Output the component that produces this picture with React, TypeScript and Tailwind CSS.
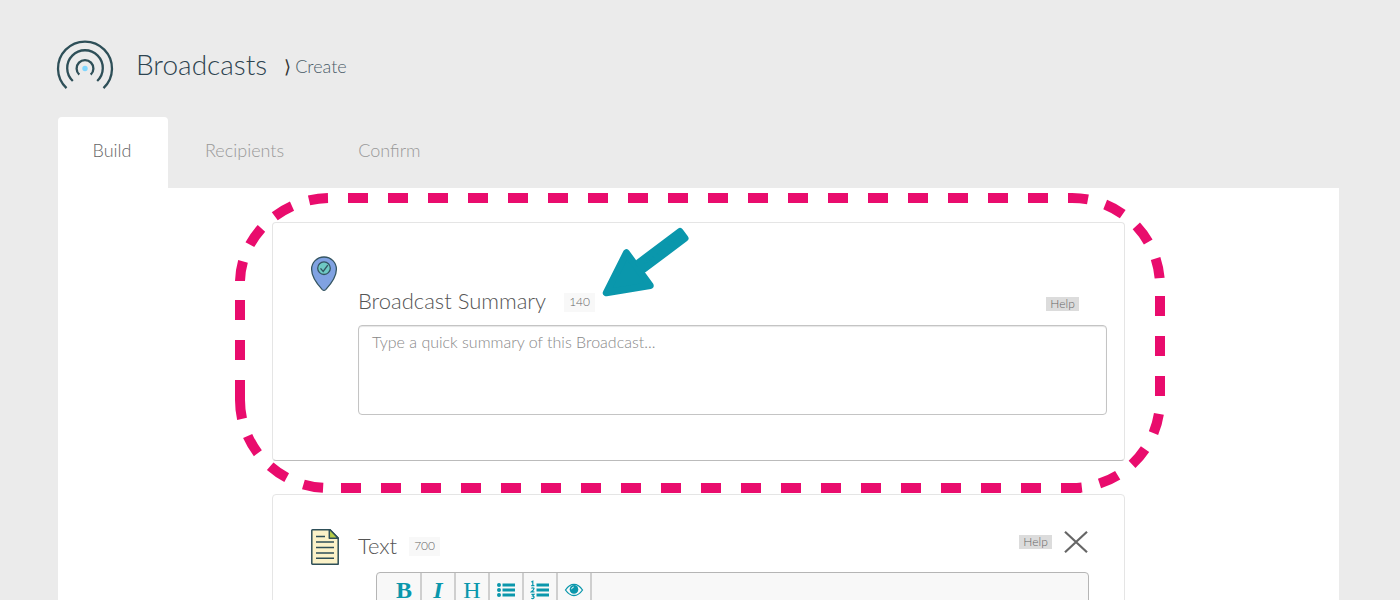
import { useState } from "react";
import type { ReactNode } from "react";

const BroadcastLogo = () => (
  <svg className="h-[52px] w-[58px] flex-none" viewBox="0 0 58 52" fill="none" stroke="#2e4f58" strokeWidth="2.3" aria-hidden="true">
    <path d="M10.5 48.2A27 27 0 1 1 47.5 48.2" />
    <path d="M16.8 41A17.8 17.8 0 1 1 41.2 41" />
    <path d="M23.3 34.7A8.4 8.4 0 1 1 34.7 34.7" />
    <circle cx="29" cy="28.5" r="2.7" fill="#7fd6ff" stroke="none" />
  </svg>
);

const PinIcon = () => (
  <svg className="h-9 w-7" viewBox="0 0 28 36" fill="none" stroke="#345562" aria-hidden="true">
    <path d="M14 1C6.8 1 1.6 6.6 1.6 13.2C1.6 20.5 8.5 29.5 12.3 33.6Q14 35.2 15.7 33.6C19.5 29.5 26.4 20.5 26.4 13.2C26.4 6.6 21.2 1 14 1Z" fill="#80a2e2" strokeWidth="1.3" />
    <circle cx="14" cy="12.2" r="6.3" fill="#6ec9c4" strokeWidth="1.3" />
    <path d="M10.5 12.4L13.2 15.4L17.8 9.2" strokeWidth="1.4" />
  </svg>
);

const DocumentIcon = () => (
  <svg className="h-9 w-[30px]" viewBox="0 0 30 36" fill="none" stroke="#2e4f58" strokeWidth="1.5" strokeLinejoin="round" aria-hidden="true">
    <path d="M2.5 .8H20L28.2 9V35.2H2.5Q1.8 35.2 1.8 34.5V1.5Q1.8 .8 2.5 .8Z" fill="#fbf2c8" />
    <path d="M19.3 .8V9.2H28.2L20 .8Z" fill="#b6cd48" />
    <path d="M6 7.6H15M6 13H24M6 18.5H24M6 24H24M6 29.3H24" />
  </svg>
);

const HighlightFrame = () => (
  <svg className="pointer-events-none absolute -top-[30px] -left-[38px] h-[300px] w-[930px]" viewBox="235 193 930 300" fill="none" stroke="#e90c6d" strokeWidth="10" aria-hidden="true">
    <path d="M240 400V300M348 198H1050M1160 296V396M1081 488H341" strokeDasharray="20 20" />
    <path d="M240 281C241 236 281 199 328 198" strokeDasharray="20 18" />
    <path d="M1068 198H1072A88 88 0 0 1 1160 286V296" strokeDasharray="20 18" />
    <path d="M1160 396V400A88 88 0 0 1 1072 488H1061" strokeDasharray="20 18" strokeDashoffset="20" />
    <path d="M341 488H328A88 88 0 0 1 240 400" strokeDasharray="20 18" strokeDashoffset="20" />
  </svg>
);

const PointerArrow = () => (
  <svg className="pointer-events-none absolute top-[4px] left-[329px] h-[70px] w-[88px]" viewBox="602 227 88 70" fill="#0a97ac" stroke="#0a97ac" strokeLinejoin="round" aria-hidden="true">
    <path d="M626.4 252.8L606.3 292.8L650.2 285.5Z" strokeWidth="7" />
    <path d="M638.8 262.5L680 231.5L685 238.3L644 269Z" strokeWidth="7" />
  </svg>
);

const BulletListIcon = () => (
  <svg className="h-4 w-5" viewBox="0 0 20 16" fill="currentColor" aria-hidden="true">
    <circle cx="3" cy="3" r="2" />
    <circle cx="3" cy="8" r="2" />
    <circle cx="3" cy="13" r="2" />
    <path d="M6.5 1.6H19V4.4H6.5ZM6.5 6.6H19V9.4H6.5ZM6.5 11.6H19V14.4H6.5Z" />
  </svg>
);

const NumberListIcon = () => (
  <svg className="h-5 w-5" viewBox="0 0 20 20" fill="currentColor" aria-hidden="true">
    <path d="M6.5 3.6H19V6.4H6.5ZM6.5 8.6H19V11.4H6.5ZM6.5 13.6H19V16.4H6.5Z" />
    <path d="M1.3 2L2.8 1.2V5.5M1.2 5.6H4.4M1.3 8.4Q2.8 7.2 4 8.3Q4.2 9.5 1.4 11.8H4.4M1.4 14.3H4L2.6 16Q4.3 16.2 4 17.6Q3 19.2 1.3 18.2" fill="none" stroke="currentColor" strokeWidth="1.2" />
  </svg>
);

const EyeIcon = () => (
  <svg className="h-4 w-5" viewBox="0 0 20 16" fill="none" stroke="currentColor" aria-hidden="true">
    <path d="M1.5 8Q5.3 2.3 10 2.3T18.5 8Q14.7 13.5 10 13.5T1.5 8Z" strokeWidth="1.3" />
    <circle cx="10" cy="7.4" r="4.3" fill="currentColor" stroke="none" />
    <path d="M7.6 7.2Q7.8 5.2 9.8 5" stroke="#f8f8f8" strokeWidth="1" />
  </svg>
);

const Tab = ({ label, active = false }: { label: string; active?: boolean }) => (
  <button
    type="button"
    role="tab"
    aria-selected={active}
    className={
      active
        ? "h-[71px] w-[110px] rounded-t bg-white pr-0.5 pb-1.5 text-[#666]"
        : "h-[71px] px-[37px] pb-1.5 text-[#999]"
    }
  >
    {label}
  </button>
);

const Counter = ({ value }: { value: number }) => (
  <span className="flex h-[19px] items-center bg-[#f8f8f8] px-[5px] text-xs text-[#666]">{value}</span>
);

const HelpButton = () => (
  <button type="button" className="flex h-[14px] w-[33px] items-center justify-center bg-[#dcdcdc] text-xs text-[#666]">
    Help
  </button>
);

const ToolButton = ({ label, children }: { label: string; children: ReactNode }) => (
  <button
    type="button"
    aria-label={label}
    className="flex h-[34px] w-[34px] items-center justify-center border-r-2 border-[#cfcfcf] font-['Liberation_Serif',serif] text-2xl leading-5 text-[#0a97ac]"
  >
    {children}
  </button>
);

const App = () => {
  const [summary, setSummary] = useState<string>("");

  return (
    <div className="flex h-screen flex-col overflow-y-auto bg-[#ebebeb] pr-[61px] pl-[58px] font-['Lato',sans-serif] font-light">
      <header className="-ml-0.5 flex h-[117px] flex-none items-center pt-3.5">
        <BroadcastLogo />
        <h1 className="-mt-1 ml-[22px] text-[28px] text-[#2e4450]">Broadcasts</h1>
        <span className="ml-[17px] text-lg text-[#333]">⟩</span>
        <a href="#" className="ml-1 text-lg text-[#4a5c68]">Create</a>
      </header>

      <div role="tablist" className="flex flex-none text-lg">
        <Tab label="Build" active />
        <Tab label="Recipients" />
        <Tab label="Confirm" />
      </div>

      <main className="shrink-0 grow bg-white pt-[34px]">
        <div className="mx-auto flex w-[66.6%] flex-col gap-[33px]">
          <section className="relative flex rounded border border-[#e5e5e5] border-b-[#bbb] pt-[33px] pr-[17px] pb-[45px] pl-[37px]">
            <div className="w-12 flex-none">
              <PinIcon />
            </div>
            <div className="flex-1 pt-8">
              <div className="mb-[9px] flex h-7 items-center pr-7">
                <label htmlFor="summary" className="mr-[18px] pb-1 text-[22px] text-[#555]">Broadcast Summary</label>
                <Counter value={140} />
                <div className="ml-auto pt-1">
                  <HelpButton />
                </div>
              </div>
              <textarea
                id="summary"
                value={summary}
                onChange={(e) => setSummary(e.target.value)}
                placeholder="Type a quick summary of this Broadcast..."
                className="block h-[90px] w-full resize-none rounded border border-[#c4c4c4] px-[13px] py-1 text-base text-[#555] shadow-[inset_0_1px_1px_rgba(0,0,0,0.1)] placeholder:text-[#888]"
              />
            </div>
            <HighlightFrame />
            <PointerArrow />
          </section>

          <section className="flex rounded border border-[#e5e5e5] pt-[34px] pr-[35px] pb-[45px] pl-[37px]">
            <div className="w-12 flex-none">
              <DocumentIcon />
            </div>
            <div className="flex-1">
              <div className="mb-[9px] flex h-[34px] items-center">
                <h2 className="mr-3 pb-0.5 text-[22px] text-[#555]">Text</h2>
                <Counter value={700} />
                <div className="ml-auto flex items-center gap-3 pr-px pb-2">
                  <HelpButton />
                  <button type="button" aria-label="Remove">
                    <svg className="size-6" viewBox="0 0 24 24" fill="none" stroke="#666" strokeWidth="2.2" aria-hidden="true">
                      <path d="M1 1.7L23 22.3M23 1.7L1 22.3" />
                    </svg>
                  </button>
                </div>
              </div>
              <div className="ml-[18px] h-56 rounded border border-[#b5b5b5] bg-[#f8f8f8]">
                <div className="flex pl-[11px]">
                  <ToolButton label="Bold"><span className="font-bold">B</span></ToolButton>
                  <ToolButton label="Italic"><span className="font-bold italic">I</span></ToolButton>
                  <ToolButton label="Heading"><span className="font-normal">H</span></ToolButton>
                  <ToolButton label="Bullet list"><BulletListIcon /></ToolButton>
                  <ToolButton label="Numbered list"><NumberListIcon /></ToolButton>
                  <ToolButton label="Preview"><EyeIcon /></ToolButton>
                </div>
              </div>
            </div>
          </section>
        </div>
      </main>
    </div>
  );
};

export default App;
